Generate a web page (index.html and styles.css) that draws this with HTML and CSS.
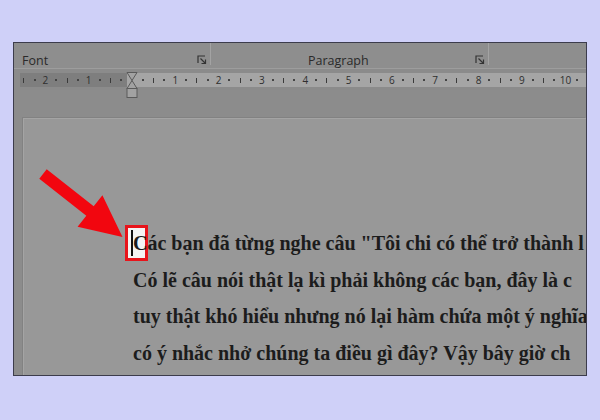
FILE: index.html
```html
<!DOCTYPE html>
<html lang="vi">
<head>
    <meta charset="UTF-8">
    <meta name="viewport" content="width=device-width, initial-scale=1.0">
    <title>Word cursor</title>
    <link rel="stylesheet" href="styles.css">
</head>
<body>
    <div class="shot">
        <div class="ribbon">
            <div class="group group-font">
                <span class="group-label">Font</span>
                <svg class="launcher" width="10" height="10" viewBox="0 0 10 10">
                    <path d="M1 8 V1 H8" fill="none" stroke="#333" stroke-width="1.2"/>
                    <path d="M3.5 3.5 L8.5 8.5 M8.5 4.5 V8.5 H4.5" fill="none" stroke="#333" stroke-width="1.2"/>
                </svg>
            </div>
            <div class="group group-para">
                <span class="group-label">Paragraph</span>
                <svg class="launcher" width="10" height="10" viewBox="0 0 10 10">
                    <path d="M1 8 V1 H8" fill="none" stroke="#333" stroke-width="1.2"/>
                    <path d="M3.5 3.5 L8.5 8.5 M8.5 4.5 V8.5 H4.5" fill="none" stroke="#333" stroke-width="1.2"/>
                </svg>
            </div>
            <div class="group group-rest"></div>
        </div>

        <div class="ruler-row">
            <div class="ruler">
                <span class="tick"><i class="half"></i></span>
                <span class="tick"><i class="dot"></i></span>
                <span class="tick num">2</span>
                <span class="tick"><i class="dot"></i></span>
                <span class="tick"><i class="half"></i></span>
                <span class="tick"><i class="dot"></i></span>
                <span class="tick num">1</span>
                <span class="tick"><i class="dot"></i></span>
                <span class="tick"><i class="half"></i></span>
                <span class="tick"><i class="dot"></i></span>
                <span class="tick marker">
                    <svg class="indent" width="12" height="27" viewBox="0 0 12 27">
                        <path d="M1 0.5 H11 L6 8.5 Z M6 8.5 L11 16.5 H1 Z" fill="#a2a2a2" stroke="#5a5a5a" stroke-width="1"/>
                        <rect x="1" y="16.5" width="10" height="9" fill="#a2a2a2" stroke="#5a5a5a" stroke-width="1"/>
                    </svg>
                </span>
                <span class="tick"><i class="dot"></i></span>
                <span class="tick"><i class="half"></i></span>
                <span class="tick"><i class="dot"></i></span>
                <span class="tick num">1</span>
                <span class="tick"><i class="dot"></i></span>
                <span class="tick"><i class="half"></i></span>
                <span class="tick"><i class="dot"></i></span>
                <span class="tick num">2</span>
                <span class="tick"><i class="dot"></i></span>
                <span class="tick"><i class="half"></i></span>
                <span class="tick"><i class="dot"></i></span>
                <span class="tick num">3</span>
                <span class="tick"><i class="dot"></i></span>
                <span class="tick"><i class="half"></i></span>
                <span class="tick"><i class="dot"></i></span>
                <span class="tick num">4</span>
                <span class="tick"><i class="dot"></i></span>
                <span class="tick"><i class="half"></i></span>
                <span class="tick"><i class="dot"></i></span>
                <span class="tick num">5</span>
                <span class="tick"><i class="dot"></i></span>
                <span class="tick"><i class="half"></i></span>
                <span class="tick"><i class="dot"></i></span>
                <span class="tick num">6</span>
                <span class="tick"><i class="dot"></i></span>
                <span class="tick"><i class="half"></i></span>
                <span class="tick"><i class="dot"></i></span>
                <span class="tick num">7</span>
                <span class="tick"><i class="dot"></i></span>
                <span class="tick"><i class="half"></i></span>
                <span class="tick"><i class="dot"></i></span>
                <span class="tick num">8</span>
                <span class="tick"><i class="dot"></i></span>
                <span class="tick"><i class="half"></i></span>
                <span class="tick"><i class="dot"></i></span>
                <span class="tick num">9</span>
                <span class="tick"><i class="dot"></i></span>
                <span class="tick"><i class="half"></i></span>
                <span class="tick"><i class="dot"></i></span>
                <span class="tick num">10</span>
                <span class="tick"><i class="dot"></i></span>
                <span class="tick"><i class="half"></i></span>
            </div>
        </div>

        <div class="doc">
            <div class="page">
                <p class="line"><span class="caret">C</span>ác bạn đã từng nghe câu "Tôi chi có thể trở thành l</p>
                <p class="line">Có lẽ câu nói thật lạ kì phải không các bạn, đây là c</p>
                <p class="line">tuy thật khó hiểu nhưng nó lại hàm chứa một ý nghĩa</p>
                <p class="line">có ý nhắc nhở chúng ta điều gì đây? Vậy bây giờ ch</p>
            </div>
        </div>
    </div>

    <!-- red pointer drawn over the screenshot -->
    <svg class="pointer" width="600" height="420" viewBox="0 0 600 420">
        <polygon points="46.7,169.3 93.7,206.3 102.4,195.2 122.5,237 77.6,226.8 86.3,215.7 39.3,178.7" fill="#f2060f"/>
    </svg>
</body>
</html>
```

FILE: styles.css
```css
body {
    margin: 0;
    width: 600px;
    height: 420px;
    background-color: #cfd0f8;
    position: relative;
    overflow: hidden;
}

.shot {
    position: relative;
    margin: 42px 0 0 13px;
    width: 572px;
    height: 332px;
    border: 1px solid #3c3c4c;
    background-color: #8c8c8c;
    overflow: hidden;
}

/* ribbon group labels */
.ribbon {
    display: flex;
    height: 25px;
    border-bottom: 1px solid #9d9d9d;
    background-color: #8e8e8e;
    font-family: "Open Sans", "Noto Sans", sans-serif;
    font-size: 12.5px;
    color: #2a2a2a;
}

.group {
    display: flex;
    align-items: flex-end;
    padding-bottom: 2px;
    box-sizing: border-box;
    border-right: 1px solid #a3a3a3;
    height: 22px;
}

.group-font {
    width: 197px;
    padding-left: 8px;
}

.group-para {
    width: 278px;
    padding-left: 97px;
}

.group-rest {
    flex: 1;
    border-right: none;
}

.group-label {
    flex: 1;
    line-height: 16px;
    margin-bottom: -6px;
}

.launcher {
    margin-right: 3px;
    margin-bottom: -2px;
}

/* ruler */
.ruler-row {
    height: 21px;
    padding-top: 4px;
    box-sizing: border-box;
    background-color: #8b8b8b;
}

.ruler {
    display: flex;
    height: 14px;
    padding-left: 4.3px;
    background: linear-gradient(to right, #8b8b8b 0, #8b8b8b 6px, #7e7e7e 6px, #7e7e7e 113px, #a5a5a5 113px);
    font-family: "Open Sans", "Noto Sans", sans-serif;
    font-size: 10px;
    color: #2e2e2e;
}

.tick {
    flex: 0 0 10.83px;
    display: flex;
    align-items: center;
    justify-content: center;
    line-height: 14px;
    white-space: nowrap;
}

.half {
    width: 1px;
    height: 5px;
    background-color: #3a3a3a;
}

.dot {
    width: 2px;
    height: 2px;
    background-color: #444;
}

.marker {
    position: relative;
}

.indent {
    position: absolute;
    left: -1px;
    top: -1px;
}

/* document */
.doc {
    height: 285px;
    padding: 28px 0 0 9px;
    box-sizing: border-box;
}

.page {
    position: relative;
    z-index: 0;
    height: 300px;
    padding: 106px 0 0 109px;
    box-sizing: border-box;
    background-color: #989898;
    border-top: 1px solid #a4a4a4;
    border-left: 1px solid #a4a4a4;
    box-shadow: -1px -1px 0 #828282;
    font-family: "Liberation Serif", "Times New Roman", serif;
    font-size: 20px;
    font-weight: bold;
    color: #1c1c1c;
}

.line {
    margin: 0;
    line-height: 36.5px;
    white-space: nowrap;
}

.caret {
    position: relative;
}

.caret::before {
    content: "";
    position: absolute;
    left: -8px;
    right: -1px;
    top: -7px;
    bottom: -7px;
    background-color: #f4f4f4;
    border: 3px solid #e8141b;
    z-index: -1;
}

.caret::after {
    content: "";
    position: absolute;
    left: -2px;
    top: -2px;
    bottom: -2px;
    width: 2px;
    background-color: #111;
}

.pointer {
    position: absolute;
    left: 0;
    top: 0;
    pointer-events: none;
}
```
